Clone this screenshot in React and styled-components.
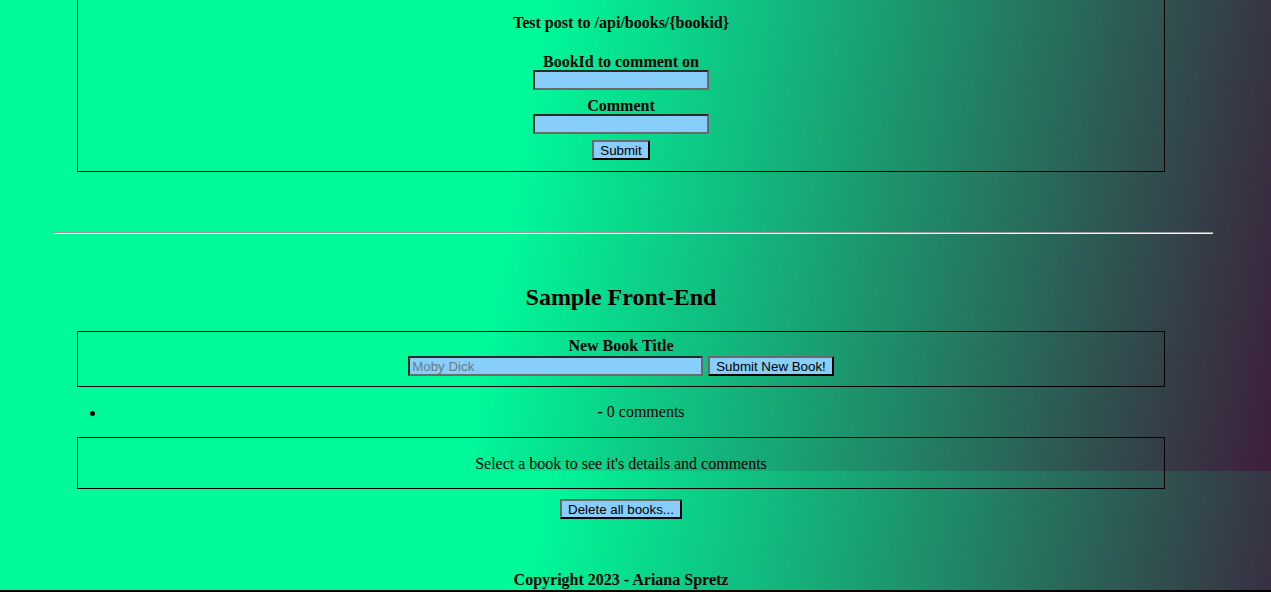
import styled, { createGlobalStyle } from "styled-components";

const GlobalStyle = createGlobalStyle`
  html, body {
    margin: 0;
    padding: 0;
  }
  body {
    font-family: "Liberation Serif", "Times New Roman", serif;
    font-size: 16px;
    color: #000;
  }
`;

const Page = styled.div`
  min-height: 592px;
  box-sizing: border-box;
  border-bottom: 2px solid #000;
  background: linear-gradient(100deg, #00fa9a 40%, #3d1f3a 100%);
  background-size: 100% 471px;
  background-repeat: repeat-y;
  overflow: hidden;
`;

const Column = styled.div`
  margin-left: 77px;
  width: 1088px;
`;

const Panel = styled.div`
  border: 1px solid #000;
  border-top: ${(p) => (p.$open ? "none" : "1px solid #000")};
  padding: ${(p) => p.$pad};
  text-align: center;
`;

const PanelTitle = styled.h4`
  margin: 0;
  font-size: 16px;
  font-weight: bold;
  line-height: 18px;
`;

const Form = styled.form`
  margin: ${(p) => p.$margin || "0"};
  display: flex;
  flex-direction: column;
  align-items: center;
`;

const Label = styled.label`
  display: block;
  font-weight: bold;
  line-height: 18px;
  height: 17px;
  padding-top: 1px;
  margin-top: ${(p) => p.$top || "0"};
`;

const Row = styled.div`
  display: flex;
  justify-content: center;
  gap: 5px;
  margin-top: 2px;
`;

const Input = styled.input`
  box-sizing: border-box;
  width: ${(p) => p.$w || "176px"};
  height: 20px;
  padding: 1px 2px;
  background: #87cefa;
  border: 2px solid;
  border-color: #2a2a2a #6a6a6a #6a6a6a #2a2a2a;
  font-family: "Liberation Sans", Arial, sans-serif;
  font-size: 13.33px;
  color: #000;
  &::placeholder {
    font-family: "Liberation Sans", Arial, sans-serif;
    font-size: 13.33px;
    color: #6f7a82;
  }
`;

const Button = styled.button`
  box-sizing: border-box;
  height: 20px;
  padding: 2px 6px 0;
  margin-top: ${(p) => p.$top || "0"};
  background: #87cefa;
  border: 2px solid;
  border-color: #6a6a6a #000 #000 #6a6a6a;
  font-family: "Liberation Sans", Arial, sans-serif;
  font-size: 13.33px;
  line-height: 14px;
  color: #000;
`;

const Divider = styled.hr`
  margin: 60px 0 0 54px;
  width: 1159px;
  height: 0;
  border: none;
  border-top: 1px solid #9a9a9a;
  border-bottom: 1px solid #f2f2f2;
`;

const Heading = styled.h2`
  margin: 49px 0 20px;
  font-size: 24px;
  line-height: 28px;
  text-align: center;
`;

const BookList = styled.ul`
  margin: 16px 0 16px;
  padding-left: 40px;
  list-style: none;
`;

const BookItem = styled.li`
  position: relative;
  text-align: center;
  line-height: 18px;
  &::before {
    content: "";
    position: absolute;
    left: -27px;
    top: 8px;
    width: 5px;
    height: 5px;
    border-radius: 50%;
    background: #000;
  }
`;

const Detail = styled.p`
  margin: 0;
  line-height: 18px;
`;

const Actions = styled.div`
  display: flex;
  justify-content: center;
  margin-top: 10px;
`;

const Footer = styled.footer`
  margin-top: 52px;
  text-align: center;
  font-weight: bold;
  line-height: 18px;
`;

export default function App() {
  return (
    <>
      <GlobalStyle />
      <Page>
        <Column>
          <Panel $open $pad="14px 0 11px">
            <PanelTitle>Test post to /api/books/{"{bookid}"}</PanelTitle>
            <Form $margin="20px 0 0">
              <Label htmlFor="idinputtest">BookId to comment on</Label>
              <Input id="idinputtest" type="text" />
              <Label htmlFor="comment" $top="6px">
                Comment
              </Label>
              <Input id="comment" type="text" />
              <Button type="button" $top="6px">
                Submit
              </Button>
            </Form>
          </Panel>
        </Column>
        <Divider />
        <Column>
          <Heading>Sample Front-End</Heading>
          <Panel $pad="4px 0 10px">
            <Form>
              <Label htmlFor="bookTitleToAdd">New Book Title</Label>
              <Row>
                <Input id="bookTitleToAdd" $w="295px" placeholder="Moby Dick" />
                <Button type="button">Submit New Book!</Button>
              </Row>
            </Form>
          </Panel>
          <BookList>
            <BookItem>- 0 comments</BookItem>
          </BookList>
          <Panel $pad="17px 0 15px">
            <Detail>Select a book to see it's details and comments</Detail>
          </Panel>
          <Actions>
            <Button type="button">Delete all books...</Button>
          </Actions>
          <Footer>Copyright 2023 - Ariana Spretz</Footer>
        </Column>
      </Page>
    </>
  );
}
